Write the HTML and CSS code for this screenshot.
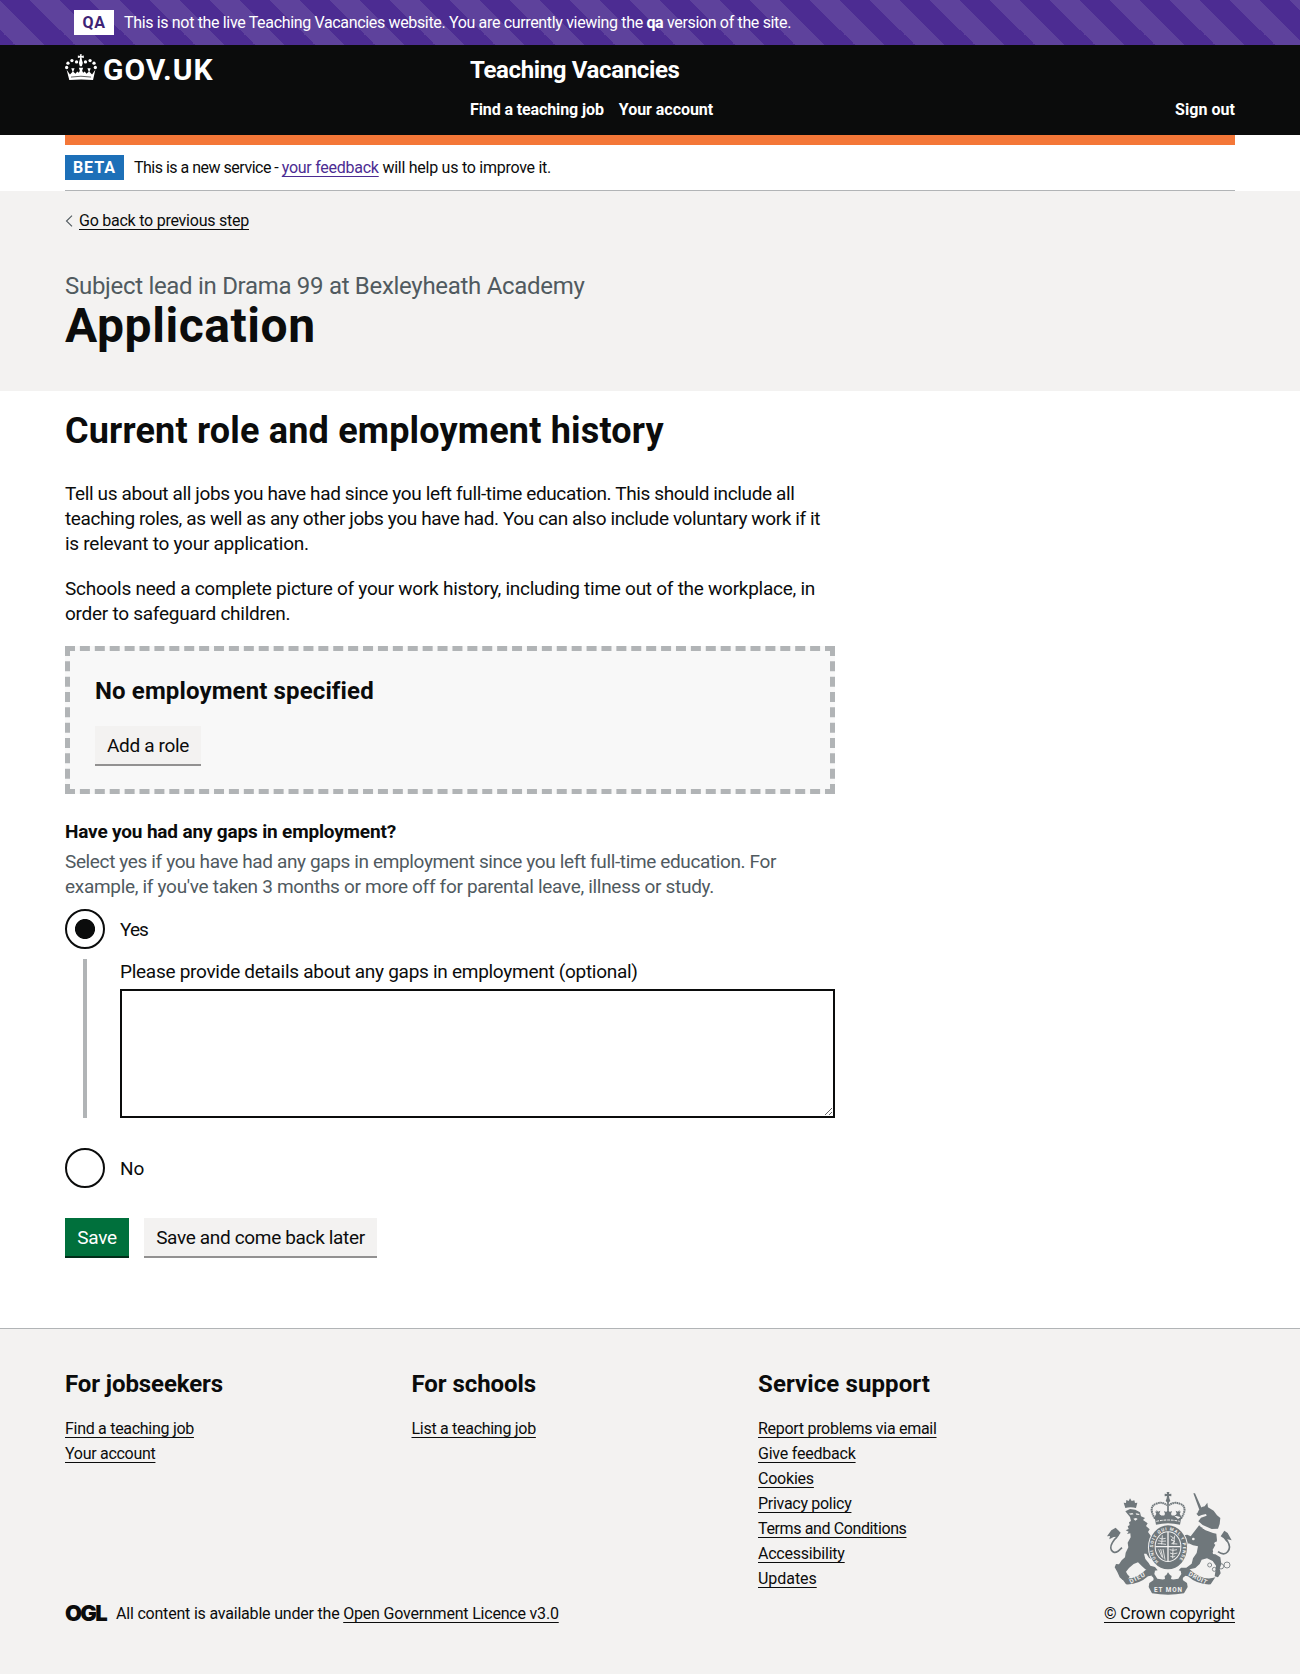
FILE: index.html
```html
<!DOCTYPE html>
<html lang="en">
<head>
<meta charset="utf-8">
<title>Application - Teaching Vacancies</title>
<link rel="stylesheet" href="styles.css">
</head>
<body>
<div class="env"><span class="env-tag">QA</span><p class="env-text">This is not the live Teaching Vacancies website. You are currently viewing the <b>qa</b> version of the site.</p></div>
<header class="header">
  <div class="container header-grid">
    <a class="logo">
      <svg class="crown" viewBox="0 0 97 80" aria-hidden="true">
        <g fill="#fff">
          <path d="M45 0h6l-1 5 7-1v7l-7-1 1 6 3 10-3 10h-6l-3-10 3-10 1-6-7 1V4l7 1z"/>
          <circle cx="35" cy="23" r="5"/><circle cx="62" cy="23" r="5"/>
          <circle cx="21" cy="19" r="5"/><circle cx="76" cy="19" r="5"/>
          <circle cx="9" cy="27" r="5"/><circle cx="88" cy="27" r="5"/>
          <circle cx="5" cy="40" r="5"/><circle cx="92" cy="40" r="5"/>
          <path d="M5 47l10 14 8-8-4-11h10l-4 11 7 6 5-7 5 4 3-6-3-9h13l-3 9 3 6 5-4 5 7 7-6-4-11h10l-4 11 8 8 10-14-7 31q-36-4-72 0z"/>
        </g>
        <path d="M18 69q30-5 61 0" fill="none" stroke="#0b0c0c" stroke-width="2"/>
      </svg>
      <span class="logo-text">GOV.UK</span>
    </a>
    <div class="header-content">
      <a class="service">Teaching Vacancies</a>
      <nav class="nav"><a class="nav-1">Find a teaching job</a><a class="nav-2">Your account</a><a class="nav-end">Sign out</a></nav>
    </div>
  </div>
</header>
<div class="container">
  <div class="phase"><strong class="tag">BETA</strong><span class="phase-text"><span class="phase-lead">This is a new service - </span><a class="visited">your feedback</a> will help us to improve it.</span></div>
</div>
<section class="hero">
  <div class="container">
    <div class="back"><svg class="chev" viewBox="0 0 8 12" aria-hidden="true"><path d="M7 .7L1.500 6 7 11.300" fill="none" stroke="#505a5f" stroke-width="1.100"/></svg><a class="link">Go back to previous step</a></div>
    <p class="caption">Subject lead in Drama 99 at Bexleyheath Academy</p>
    <h1 class="title">Application</h1>
  </div>
</section>
<main class="container main">
  <div class="column">
    <h2 class="heading">Current role and employment history</h2>
    <p class="body intro"><span class="tight">Tell us about all jobs you have had since you left full-time education. This should include all</span><br><span class="tighter">teaching roles, as well as any other jobs you have had. You can also include voluntary work if it</span><br>is relevant to your application.</p>
    <p class="body">Schools need a complete picture of your work history, including time out of the workplace, in<br>order to safeguard children.</p>
    <div class="empty"><h3 class="empty-title">No employment specified</h3><a class="button secondary add">Add a role</a></div>
    <fieldset class="gaps">
      <legend class="legend">Have you had any gaps in employment?</legend>
      <p class="hint"><span class="tight">Select yes if you have had any gaps in employment since you left full-time education. For</span><br>example, if you've taken 3 months or more off for parental leave, illness or study.</p>
      <label class="radio"><input type="radio" name="gaps" checked class="dot"><span class="yes">Yes</span></label>
      <div class="conditional"><label class="details" for="details">Please provide details about any gaps in employment (optional)</label><textarea id="details" class="textarea"></textarea></div>
      <label class="radio"><input type="radio" name="gaps" class="dot">No</label>
    </fieldset>
    <div class="buttons"><button class="button primary">Save</button><button class="button secondary later">Save and come back later</button></div>
  </div>
</main>
<footer class="footer">
  <div class="container">
    <div class="footer-grid">
      <div><h2 class="footer-title">For jobseekers</h2><ul class="list"><li><a class="link">Find a teaching job</a></li><li><a class="link">Your account</a></li></ul></div>
      <div><h2 class="footer-title schools">For schools</h2><ul class="list"><li><a class="link">List a teaching job</a></li></ul></div>
      <div><h2 class="footer-title support">Service support</h2><ul class="list"><li><a class="link">Report problems via email</a></li><li><a class="link loose">Give feedback</a></li><li><a class="link loose">Cookies</a></li><li><a class="link">Privacy policy</a></li><li><a class="link terms">Terms and Conditions</a></li><li><a class="link loose">Accessibility</a></li><li><a class="link updates">Updates</a></li></ul></div>
    </div>
    <div class="meta">
      <div class="licence"><span class="ogl">OGL</span><span class="licence-text">All content is available under the <a class="link">Open Government Licence v3.0</a></span></div>
      <a class="copyright">
        <svg class="crest" viewBox="0 0 414 336" aria-hidden="true">
          <g fill="#6f777b">
            <!-- lion -->
            <path d="M70 66l-5-16 7 1 1-9 7 3 4-8 5 8 8-2 2 8 7-1-4 16q-16-4-32 0z"/>
            <path d="M70 76l14-7 16 2 14 8 3 12 12 5-6 6 14 10-5 8 11 10-5 8 9 13-3 14 10 9 5 13-5 4 9 14 5 8-3 10-9 2-15-10-8-12-7 0 4 16 10 12 5 8 14 4 8 10-19 3-18-6-10-9-12-12-13 5-14 12-9 11 4 8 7 7-7 9-14 1-9-8-7-16-8-14 4-10 9 1 8-12 10-9 2-14 8-16-2-14 9-16-1-12-10 2 5-7-9-4 9-4-3-8 6-4-2-8 6-4-3-12z"/>
            <path d="M56 140l-15-15-13 8-13 18 9-1-2 10 13-7 13-1z"/>
            <!-- unicorn -->
            <path d="M274 22l5 0 20 45-7 4zM286 82l5-11 9-8 8-2 8-11 2 14 17 10 10 14 10 8-2 18-5 14-19 1-27-12-13-11 8-11 17-6-2-5-13 3-9 4-7-8z"/>
            <path d="M292 117l17 15 24 9 10 2 2 20-5 14-8 14 3 11 20 12 3 20-5 14 3 14-8 12-10-3 2-14 2-18-10-14-17-8-16 4-6 13-13 12-17 4-9 4-10 3-14-4 7-8 16 0 16-12 4-16 11-16 4-20-15-3-13-6-9 9-4 12-11 9-7-5 3-9 7-5 4-11-12 5-12-7 0-9 10-1 5 4 7-8-12-2-6-10 5-7 10 5 5 6 13-2 10 5z"/>
            <path d="M356 151l11-17 10 7 12 22-13-3-2 8-9-11z"/>
            <!-- crown -->
            <path d="M194 18h8l-1 6 7-1v8l-7-1 1 7 3 8-7 6-7-6 3-8 1-7-7 1v-8l7 1z"/>
            <path d="M158 94q39-14 80 0l-4 22q-36-9-72 0zM164 72l4 5 7-3-3 9 6 8-10 8-10-7 5-9-4-7 4 2zM198 70l5 8 7-3-3 9 5 9-14 5-14-5 5-9-3-9 7 3zM232 72l-4 5-7-3 3 9-6 8 10 8 10-7-5-9 4-7-4 2z"/>
            <!-- ribbon -->
            <path d="M155 248q-13 3-11 12l5 11q8 4 5 12l-12 8-2 12 10 19q48 8 96 0l11-19-2-12-12-8q-3-8 6-12l5-11q2-9-11-12l-7 6 2 10-9 14q-30 6-63 0l-9-14 2-10z"/>
            <path d="M188 270l5-3 5-8 6 8 5 3-2 9 7 3-9 9-7 4-7-4-9-9 7-3z"/>
            <path d="M57 274q38 13 78-26l19 1-7 20-9 2q-29 26-66 24zM340 274q-38 13-79-26l-19 1 7 20 9 2q29 26 68 24z"/>
          </g>
          <g fill="none" stroke="#6f777b">
            <path d="M46 135q8 11-9 26-15 19-9 31 7 12 20 4l12-11M369 145q-1 12 8 22 11 17 0 30-11 13-29 0" stroke-width="5"/>
            <path d="M159 98Q137 62 163 53q19-7 32 5M237 98q23-36-4-45-18-7-32 5" stroke-width="6" stroke-dasharray="5 1.500"/>
            <path d="M198 48v25" stroke-width="5"/>
            <g stroke-width="2.500"><circle cx="323" cy="237" r="6"/><circle cx="337" cy="250" r="6"/><circle cx="357" cy="241" r="8"/><circle cx="375" cy="237" r="9"/></g>
          </g>
          <g fill="#f3f2f1">
            <circle cx="272" cy="132" r="4"/><circle cx="274" cy="159" r="4"/><circle cx="342" cy="172" r="5"/><circle cx="337" cy="200" r="5"/><circle cx="282" cy="115" r="4"/>
            <path d="M80 83l11-2 4 4-9 1zM101 82l9 1 3 4-10-1zM94 98l8-2 5 3-7 5z"/>
          </g>
          <path d="M291 113q17 21 49 22" fill="none" stroke="#f3f2f1" stroke-width="6" stroke-dasharray="5 3"/>
          <path d="M163 106q35-8 70 0" fill="none" stroke="#f3f2f1" stroke-width="3" stroke-dasharray="8 3"/>
          <ellipse cx="198" cy="184" rx="60" ry="69" fill="#f3f2f1"/><ellipse cx="198" cy="184" rx="57" ry="66" fill="#6f777b"/>
          <ellipse cx="198" cy="182" rx="40" ry="46" fill="#f3f2f1"/><ellipse cx="198" cy="182" rx="37" ry="43" fill="#6f777b"/>
          <g fill="none" stroke="#f3f2f1" stroke-width="2.500">
            <path d="M198 138v88M160 182h76" stroke-width="4"/>
            <path d="M172 156l8 3 11-2M169 164l9 2 14-1M167 173l10 0 15 2M181 148l-2 27M205 150l10 6-8 6 12 4-10 7 17 1M218 149l-3 26M170 190l10 23M176 189l7 28M183 189l6 32M203 191l10 2 12-2M204 201l9 3 13-3M205 211l8 2 7-3M213 187l-1 30"/>
          </g>
          <path id="garter" d="M173 230A45 53 0 1 1 223 230" fill="none"/>
          <text class="crest-text"><textPath href="#garter" startOffset="4" textLength="236">HONI SOIT QUI MAL Y PENSE</textPath></text>
          <text class="crest-text motto" transform="translate(86 293) rotate(-27)" textLength="50">DIEU</text>
          <text class="crest-text motto" x="156" y="317" textLength="84">ET MON</text>
          <text class="crest-text motto" transform="translate(258 268) rotate(27)" textLength="60">DROIT</text>
        </svg>
        <span class="link">© Crown copyright</span>
      </a>
    </div>
  </div>
</footer>
</body>
</html>
```
FILE: styles.css
```css
* { box-sizing: border-box; }
body { margin: 0; font-family: Roboto, "Liberation Sans", sans-serif; font-size: 19px; line-height: 25px; color: #0b0c0c; background: #fff; }
h1, h2, h3, p, ul, fieldset { margin: 0; padding: 0; border: 0; }
.container { width: 1170px; margin: 0 auto; }
.env { height: 45px; padding: 10px 74px; display: flex; color: #fff; font-size: 16px; background: linear-gradient(45deg, #4c2c92 25%, #5e429c 25% 50%, #4c2c92 50% 75%, #5e429c 75%) 0 0 / 60px 60px; }
.env-tag { width: 40px; height: 25px; background: #fff; color: #3d2375; font-weight: 700; text-align: center; line-height: 25px; margin-right: 10px; letter-spacing: 0.500px; }
.env-text { letter-spacing: -0.340px; white-space: nowrap; }
.header { height: 90px; background: #0b0c0c; color: #fff; }
.header-grid { display: grid; grid-template-columns: 405px 1fr; }
.logo { display: flex; padding-top: 9px; }
.crown { width: 32px; height: 27px; margin-right: 6px; }
.logo-text { font-size: 30px; font-weight: 700; line-height: 32px; letter-spacing: 0.950px; }
.service { display: block; font-size: 24px; font-weight: 700; line-height: 30px; padding-top: 10px; letter-spacing: -0.360px; }
.nav { display: flex; font-size: 16px; font-weight: 700; margin-top: 12px; }
.nav-1 { letter-spacing: -0.110px; }
.nav-2 { margin-left: 15px; letter-spacing: -0.050px; }
.nav-end { margin-left: auto; letter-spacing: 0.050px; }
.phase { border-top: 10px solid #f47738; border-bottom: 1px solid #b1b4b6; height: 56px; display: flex; padding-top: 10px; font-size: 16px; }
.phase-text { letter-spacing: -0.260px; white-space: pre; }
.phase-lead { letter-spacing: -0.500px; }
.tag { width: 59px; height: 25px; background: #1d70b8; color: #fff; text-align: center; letter-spacing: 1px; margin-right: 10px; line-height: 25px; }
.visited { color: #4c2c92; text-decoration: underline; text-underline-offset: 3px; text-decoration-thickness: 1px; }
.link { text-decoration: underline; text-underline-offset: 3px; text-decoration-thickness: 1px; }
.hero { height: 200px; background: #f3f2f1; padding-top: 17px; }
.back { font-size: 16px; display: flex; align-items: center; letter-spacing: -0.240px; }
.chev { width: 8px; height: 12px; margin-right: 6px; }
.caption { color: #505a5f; font-size: 24px; line-height: 30px; margin-top: 38px; letter-spacing: -0.300px; }
.title { font-size: 48px; line-height: 50px; letter-spacing: 0.560px; }
.main { padding-top: 20px; height: 937px; }
.column { width: 770px; }
.heading { font-size: 36px; line-height: 40px; margin-bottom: 30px; letter-spacing: 0.185px; }
.body { margin-bottom: 20px; white-space: nowrap; letter-spacing: -0.263px; }
.tight { letter-spacing: -0.370px; }
.tighter { letter-spacing: -0.395px; }
.empty { height: 148px; border: 5px dashed #b1b4b6; background: #f8f8f8; padding: 25px; }
.empty-title { font-size: 24px; line-height: 30px; margin-bottom: 20px; letter-spacing: 0.128px; }
.button { display: inline-block; border: 0; height: 40px; padding: 7px 0 8px; font: inherit; line-height: 25px; text-align: center; letter-spacing: -0.340px; white-space: nowrap; }
.primary { background: #00703c; color: #fff; box-shadow: inset 0 -2px #002d18; width: 64px; }
.secondary { background: #f3f2f1; color: #0b0c0c; box-shadow: inset 0 -2px #929191; }
.add { width: 106px; }
.later { width: 233px; margin-left: 15px; }
.gaps { margin-top: 25px; }
.legend { font-weight: 700; padding: 0; margin-bottom: 5px; letter-spacing: -0.173px; }
.hint { color: #505a5f; margin-bottom: 10px; white-space: nowrap; letter-spacing: -0.308px; }
.radio { display: flex; align-items: center; height: 40px; }
.yes { letter-spacing: -0.900px; }
.dot { appearance: none; width: 40px; height: 40px; border: 2px solid #0b0c0c; border-radius: 50%; margin: 0 15px 0 0; }
.dot:checked { background: radial-gradient(circle, #0b0c0c 9.600px, transparent 10.400px); }
.conditional { margin: 10px 0 30px 18px; border-left: 4px solid #b1b4b6; padding-left: 33px; height: 159px; }
.details { display: block; margin-bottom: 5px; letter-spacing: -0.280px; }
.textarea { display: block; width: 715px; height: 129px; border: 2px solid #0b0c0c; border-radius: 0; margin: 0; padding: 5px; resize: vertical; }
.buttons { display: flex; margin-top: 30px; }
.footer { border-top: 1px solid #b1b4b6; background: #f3f2f1; padding-top: 40px; height: 346px; font-size: 16px; }
.footer-grid { display: grid; grid-template-columns: 346.500px 346.500px 1fr; height: 222px; }
.footer-title { font-size: 24px; line-height: 30px; margin-bottom: 17px; letter-spacing: -0.100px; }
.schools { letter-spacing: -0.060px; }
.support { letter-spacing: 0.100px; }
.list { list-style: none; letter-spacing: -0.290px; }
.loose { letter-spacing: -0.220px; }
.terms { letter-spacing: -0.380px; }
.updates { letter-spacing: -0.050px; }
.meta { display: flex; justify-content: space-between; padding-top: 10px; }
.licence { display: flex; }
.ogl { font: 900 22px/25px Inter, sans-serif; width: 51px; letter-spacing: -1.700px; }
.licence-text { letter-spacing: -0.200px; }
.copyright { display: flex; flex-direction: column; align-items: flex-end; letter-spacing: -0.087px; }
.crest { display: block; width: 138px; height: 112px; margin: -115px -5px 3px 0; }
.crest-text { fill: #f3f2f1; font: 700 13px Roboto, sans-serif; letter-spacing: 0; }
.motto { font-size: 19px; }
```
